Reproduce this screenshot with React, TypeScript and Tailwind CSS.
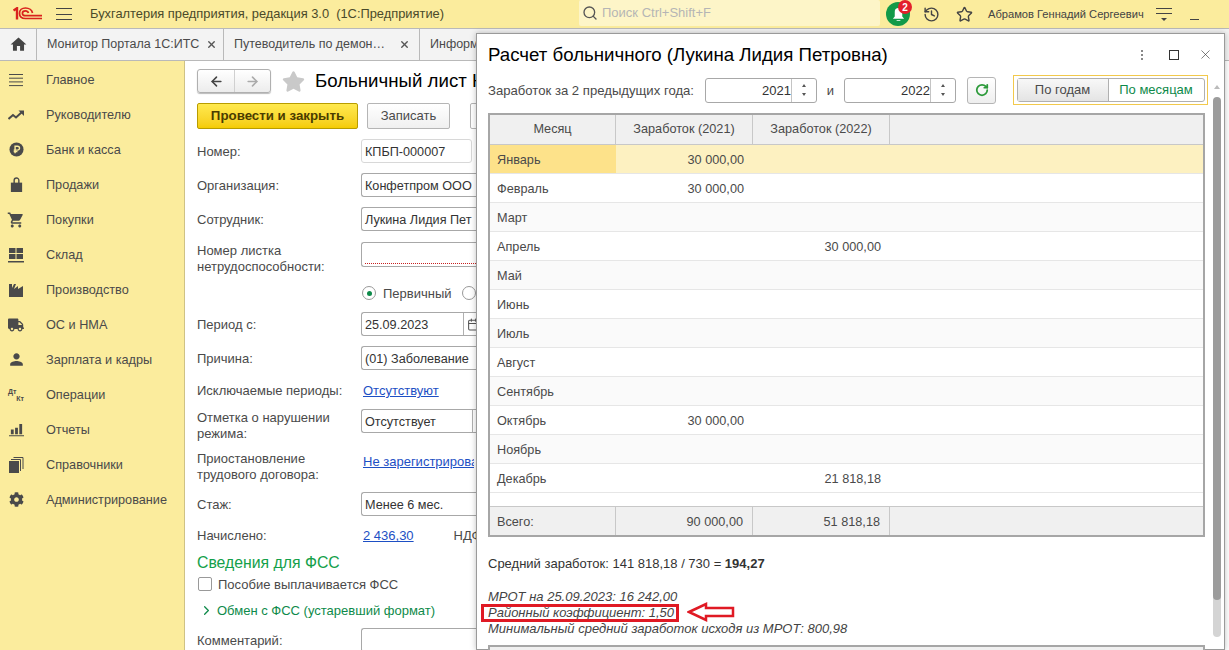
import { type ReactNode } from "react";
import { ArrowLeft, ArrowRight, Calendar, ChevronRight, History, RotateCw, Search, Star, X } from "lucide-react";
import { FaCog, FaStar, FaTruck } from "react-icons/fa";
import { MdHome, MdPerson, MdShoppingCart } from "react-icons/md";

const Ruble = () => (
  <svg viewBox="0 0 16 16" className="size-[15px]">
    <circle cx="8" cy="8" r="7.5" fill="#4a4a4a" />
    <path d="M6.5 12V4.5h2.6a2 2 0 0 1 0 4.2H5M5 10.3h4" fill="none" stroke="#fbec9d" strokeWidth="1.5" />
  </svg>
);

const Bag = () => (
  <svg viewBox="0 0 16 16" className="size-[15px]">
    <path d="M2 6h12v10H2z" fill="#4a4a4a" />
    <path d="M5.5 8V3.5a2.5 2.5 0 0 1 5 0V8" fill="none" stroke="#4a4a4a" strokeWidth="1.5" />
  </svg>
);

const Warehouse = () => (
  <svg viewBox="0 0 16 16" className="size-[16px]">
    <path d="M1 1h6.5v5H1zM8.5 1H15v5H8.5zM1 7h6.5v5H1zM8.5 7H15v5H8.5zM0 14h16v1.4H0z" fill="#4a4a4a" />
  </svg>
);

const Factory = () => (
  <svg viewBox="0 0 16 16" className="size-[16px]">
    <path d="M1 15V2h3v4l2-4h2l-2 5 4-3v3l5-3v11z" fill="#4a4a4a" />
  </svg>
);

const Bars = () => (
  <svg viewBox="0 0 16 16" className="size-[15px]">
    <path d="M2 8h3v5H2zM6.5 6h3v7h-3zM11 2h3v11h-3zM0 14h16v1.2H0z" fill="#4a4a4a" />
  </svg>
);

const Docs = () => (
  <svg viewBox="0 0 16 16" className="size-[16px]">
    <path d="M1 4h10v12H1z" fill="#4a4a4a" />
    <path d="M12.5 14V2.5H3M15 12V.5H5.5" fill="none" stroke="#4a4a4a" />
  </svg>
);

const Lines = () => (
  <svg viewBox="0 0 16 16" className="size-[16px]">
    <path d="M1 2.5h14M1 6.2h14M1 9.9h14M1 13.6h14" stroke="#4a4a4a" />
  </svg>
);

const Trend = () => (
  <svg viewBox="0 0 16 16" className="size-[16px]">
    <path d="M.5 12l4.5-4 3 2.5L14 5" fill="none" stroke="#4a4a4a" strokeWidth="2" />
    <path d="M10.5 3.5H16V9z" fill="#4a4a4a" />
  </svg>
);

const DtKt = () => (
  <div className="flex w-[16px] flex-col text-[7px] leading-[7px] font-bold text-[#4a4a4a]">
    <span>Дт</span>
    <span className="self-end">Кт</span>
  </div>
);

const Logo = () => (
  <svg viewBox="0 0 30 14" className="h-[14px] w-[30px]">
    <path d="M.5 3.5L4 1.200V12.500" fill="none" stroke="#d9231d" strokeWidth="2.400" />
    <path d="M19.500 6C19 3 16 1 12.500 1C9 1 6.500 3 6.500 6.200C6.500 9.500 9 11.500 12.500 11.500H29" fill="none" stroke="#d9231d" strokeWidth="1.700" />
    <path d="M15.500 6C15 4.500 14 3.800 12.500 3.800C10.800 3.800 9.400 4.800 9.400 6.200C9.400 7.800 10.800 8.700 12.500 8.700H29" fill="none" stroke="#d9231d" strokeWidth="1.700" />
  </svg>
);

const menu: [ReactNode, string][] = [
  [<Lines />, "Главное"],
  [<Trend />, "Руководителю"],
  [<Ruble />, "Банк и касса"],
  [<Bag />, "Продажи"],
  [<MdShoppingCart size={18} color="#4a4a4a" />, "Покупки"],
  [<Warehouse />, "Склад"],
  [<Factory />, "Производство"],
  [<FaTruck size={16} color="#4a4a4a" />, "ОС и НМА"],
  [<MdPerson size={19} color="#4a4a4a" />, "Зарплата и кадры"],
  [<DtKt />, "Операции"],
  [<Bars />, "Отчеты"],
  [<Docs />, "Справочники"],
  [<FaCog size={15} color="#4a4a4a" />, "Администрирование"],
];

const months: [string, string, string][] = [
  ["Январь", "30 000,00", ""],
  ["Февраль", "30 000,00", ""],
  ["Март", "", ""],
  ["Апрель", "", "30 000,00"],
  ["Май", "", ""],
  ["Июнь", "", ""],
  ["Июль", "", ""],
  ["Август", "", ""],
  ["Сентябрь", "", ""],
  ["Октябрь", "30 000,00", ""],
  ["Ноябрь", "", ""],
  ["Декабрь", "", "21 818,18"],
];

const cols = "grid grid-cols-[126px_137px_137px_1fr]";

// the dialog covers the right part of these, so they stop at its left edge
const openField = "w-[115px] rounded-r-none border-r-0";

const Field = ({ children, className = openField }: { children?: ReactNode; className?: string }) => (
  <div className={`flex h-[24px] shrink-0 items-center overflow-hidden rounded-[3px] border border-[#a8a8a8] bg-white pl-[3px] pt-[2px] text-[12.650px] whitespace-nowrap text-[#333] ${className}`}>
    {children}
  </div>
);

const Row = ({ label, h = 24, mt = 10, children }: { label?: ReactNode; h?: number; mt?: number; children?: ReactNode }) => (
  <div className="flex items-center" style={{ height: h, marginTop: mt }}>
    <div className="w-[164px] shrink-0 pt-[2px] leading-[16px] text-[#4a4a4a]">{label}</div>
    {children}
  </div>
);

const YearInput = ({ value }: { value: string }) => (
  <div className="flex h-[25px] w-[112px] shrink-0 items-center rounded-[3px] border border-[#a8a8a8] bg-white">
    <span className="flex-1 pt-[2px] text-right text-[#333]">{value}</span>
    <div className="flex h-full w-[25px] flex-col items-center justify-center gap-[6px] border-l border-[#c4c4c4]">
      <div className="size-0 border-x-[2px] border-b-[3px] border-x-transparent border-b-[#555]" />
      <div className="size-0 border-x-[2px] border-t-[3px] border-x-transparent border-t-[#555]" />
    </div>
  </div>
);

export default function App() {
  return (
    <div className="relative flex h-[650px] w-[1229px] flex-col overflow-hidden bg-white font-['Liberation_Sans',Arial,sans-serif] text-[13px]">
      <header className="flex h-[28px] items-center bg-[#fbec9d] text-[12.860px]">
        <div className="ml-[13px] w-[30px]"><Logo /></div>
        <div className="ml-[13px] flex w-[16px] flex-col gap-[4.500px]">
          <div className="h-px bg-[#444]" />
          <div className="h-px bg-[#444]" />
          <div className="h-px bg-[#444]" />
        </div>
        <div className="ml-[18px] w-[489px] text-[#4a4a2a]">Бухгалтерия предприятия, редакция 3.0&nbsp; (1С:Предприятие)</div>
        <div className="flex h-[26px] w-[301px] items-center gap-[4px] self-start rounded-[2px] bg-[#fdf5c8] pl-[3px] text-[13px] text-[#b5b5b5]">
          <Search size={16} color="#555" />
          Поиск Ctrl+Shift+F
        </div>
        <div className="relative ml-[6px] flex size-[24px] items-center justify-center rounded-full bg-[#129a48]">
          <svg viewBox="0 0 16 16" className="size-[15px]"><path d="M8 1a4 4 0 0 1 4 4v5l2 2.500H2L4 10V5a4 4 0 0 1 4-4zM6 14h4v1H6z" fill="#fff" /></svg>
          <div className="absolute top-[-2px] left-[12px] flex size-[14px] items-center justify-center rounded-full bg-[#e3202c] text-[10px] font-bold text-white">2</div>
        </div>
        <History size={17} color="#444" className="ml-[13px]" />
        <Star size={17} color="#444" className="ml-[16px]" />
        <div className="ml-[15px] w-[155px] text-[11.150px] whitespace-nowrap text-[#444]">Абрамов Геннадий Сергеевич</div>
        <div className="ml-[13px] flex w-[16px] flex-col items-center gap-[4px]">
          <div className="h-px w-full bg-[#444]" />
          <div className="h-px w-full bg-[#444]" />
          <div className="size-0 border-x-[3px] border-t-[3px] border-x-transparent border-t-[#444]" />
        </div>
        <div className="mt-[10px] ml-[18px] h-px w-[9px] bg-[#444]" />
      </header>

      <nav className="flex h-[33px] border-y border-[#b9b9b9] bg-[#f3f3f3] text-[12.500px] text-[#4a4a4a]">
        <div className="flex w-[37px] items-center justify-center border-r border-[#b9b9b9]"><MdHome size={19} color="#444" /></div>
        <div className="flex w-[187px] items-center justify-between border-r border-[#b9b9b9] pr-[6px] pl-[10px]">
          Монитор Портала 1С:ИТС
          <X size={11} strokeWidth={3} color="#555" />
        </div>
        <div className="flex w-[196px] items-center justify-between border-r border-[#b9b9b9] pr-[9px] pl-[10px]">
          Путеводитель по демон…
          <X size={11} strokeWidth={3} color="#555" />
        </div>
        <div className="flex w-[56px] items-center overflow-hidden pl-[10px]">Информ</div>
      </nav>

      <div className="flex min-h-0 flex-1">
        <aside className="w-[185px] shrink-0 border-r border-[#cfc285] bg-[#fbec9d] pt-[1px] text-[12.700px]">
          {menu.map(([icon, name]) => (
            <div key={name} className="flex h-[35px] items-center text-[#4a4a4a]">
              <div className="flex w-[46px] justify-center pr-[14px]">{icon}</div>
              <span className="pt-[2px]">{name}</span>
            </div>
          ))}
        </aside>

        <main className="min-w-0 flex-1 overflow-hidden pl-[12px]">
          <div className="mt-[8px] flex h-[24px] items-center">
            <div className="flex h-[24px] w-[74px] rounded-[3px] border border-[#b0b0b0] bg-gradient-to-b from-white to-[#ececec] shadow-[0_1px_1px_#bbb]">
              <div className="flex w-[37px] items-center justify-center border-r border-[#d0d0d0]"><ArrowLeft size={15} strokeWidth={2.500} color="#444" /></div>
              <div className="flex flex-1 items-center justify-center"><ArrowRight size={15} strokeWidth={2.500} color="#aaa" /></div>
            </div>
            <FaStar size={23} color="#c9c9c9" className="ml-[11px]" />
            <div className="ml-[10px] w-[161px] overflow-hidden text-[18.670px] whitespace-nowrap text-black">Больничный лист Н</div>
          </div>
          <div className="mt-[10px] flex h-[26px] gap-[9px]">
            <div className="flex w-[161px] items-center justify-center rounded-[2px] border border-[#b89c00] bg-gradient-to-b from-[#ffe94d] to-[#f5cc00] text-[13.300px] font-bold text-[#4a3c00]">Провести и закрыть</div>
            <div className="flex w-[83px] items-center justify-center rounded-[2px] border border-[#b5b5b5] bg-gradient-to-b from-white to-[#f0f0f0] text-[#4a4a4a]">Записать</div>
            <div className="ml-[11px] w-[60px] rounded-[2px] border border-[#b5b5b5] bg-white" />
          </div>

          <Row label="Номер:" mt={10}><Field className="w-[111px] border-[#d8d8d8]">КПБП-000007</Field></Row>
          <Row label="Организация:"><Field>Конфетпром ООО</Field></Row>
          <Row label="Сотрудник:"><Field>Лукина Лидия Пет</Field></Row>
          <Row label={<>Номер листка<br />нетрудоспособности:</>} h={32} mt={11}>
            <Field className={`mb-[7px] h-[25px] items-end ${openField}`}><div className="mb-[2px] w-full border-b border-dotted border-[#c82020]" /></Field>
          </Row>
          <Row mt={9} h={20}>
            <div className="flex items-center gap-[7px] text-[#4a4a4a]">
              <div className="ml-[1px] flex size-[14px] items-center justify-center rounded-full border border-[#999]"><div className="size-[5px] rounded-full bg-[#0e8a4a]" /></div>
              <span className="pt-[1px]">Первичный</span>
              <div className="ml-[3px] size-[14px] rounded-full border border-[#999]" />
            </div>
          </Row>
          <Row label="Период с:" mt={9}>
            <Field>
              <span className="w-[98px] shrink-0">25.09.2023</span>
              <span className="-mt-[2px] flex h-[22px] shrink-0 items-center border-l border-[#b0b0b0] pl-[3px]"><Calendar size={13} color="#555" /></span>
            </Field>
          </Row>
          <Row label="Причина:"><Field>(01) Заболевание</Field></Row>
          <Row label="Исключаемые периоды:" h={16} mt={12}><span className="pt-[2px] pl-[2px] text-[#1d4fc4] underline">Отсутствуют</span></Row>
          <Row label={<>Отметка о нарушении<br />режима:</>} h={32} mt={11}>
            <Field className={`mb-[8px] ${openField}`}><span className="w-[107px] shrink-0">Отсутствует</span><span className="-mt-[2px] h-[22px] border-l border-[#b0b0b0]" /></Field>
          </Row>
          <Row label={<>Приостановление<br />трудового договора:</>} h={32} mt={9}>
            <span className="-mt-[8px] w-[113px] shrink-0 overflow-hidden pl-[2px] whitespace-nowrap text-[#1d4fc4] underline">Не зарегистрировано</span>
          </Row>
          <Row label="Стаж:" mt={10}><Field>Менее 6 мес.</Field></Row>
          <Row label="Начислено:" h={16} mt={11}>
            <span className="pt-[2px] pl-[2px] text-[#1d4fc4] underline">2 436,30</span>
            <span className="ml-[40px] w-[23px] overflow-hidden pt-[2px] whitespace-nowrap text-[#4a4a4a]">НДФЛ</span>
          </Row>
          <div className="mt-[10px] h-[20px] text-[15.800px] leading-[20px] text-[#14a04a]">Сведения для ФСС</div>
          <div className="mt-[1px] flex h-[20px] items-center gap-[6px] text-[#4a4a4a]">
            <div className="ml-[1px] size-[14px] rounded-[2px] border border-[#999] bg-white" />
            <span className="pt-[1px]">Пособие выплачивается ФСС</span>
          </div>
          <div className="mt-[6px] flex h-[20px] items-center gap-[3px] text-[#0e8a4a]">
            <ChevronRight size={15} color="#0e8a4a" className="ml-[2px]" />
            <span className="pt-[1px]">Обмен с ФСС (устаревший формат)</span>
          </div>
          <Row label="Комментарий:" h={24} mt={8}><Field /></Row>
        </main>
      </div>

      <section className="absolute top-[33px] left-[476px] flex h-[617px] w-[749px] flex-col border border-[#9a9a9a] bg-white shadow-[0_0_6px_rgba(0,0,0,0.25)]">
        <div className="flex h-[41px] shrink-0 items-center pr-[11px] pl-[11px]">
          <div className="flex-1 text-[18.670px] text-black">Расчет больничного (Лукина Лидия Петровна)</div>
          <div className="flex flex-col gap-[2px]">
            <div className="size-[2px] bg-[#888]" />
            <div className="size-[2px] bg-[#888]" />
            <div className="size-[2px] bg-[#888]" />
          </div>
          <div className="mr-[1px] ml-[26px] size-[10px] border border-[#333]" />
          <X size={15} strokeWidth={1} color="#333" className="ml-[18px]" />
        </div>
        <div className="flex min-h-0 flex-1">
          <div className="w-[736px] shrink-0 pl-[11px]">
            <div className="flex h-[30px] items-center text-[#4a4a4a]">
              <span className="w-[217px] shrink-0 pt-[2px] text-[13.130px]">Заработок за 2 предыдущих года:</span>
              <YearInput value="2021" />
              <span className="w-[27px] shrink-0 pt-[2px] text-center">и</span>
              <YearInput value="2022" />
              <div className="ml-[11px] flex h-[27px] w-[29px] shrink-0 items-center justify-center rounded-[3px] border border-[#b5b5b5] bg-gradient-to-b from-white to-[#eee]">
                <RotateCw size={14} strokeWidth={3} color="#2c9a3a" />
              </div>
              <div className="ml-[17px] flex h-[30px] w-[195px] shrink-0 items-center justify-center border border-[#f2c94c]">
                <div className="flex h-[24px] w-[188px] rounded-[3px] border border-[#b0b0b0]">
                  <div className="flex w-[91px] items-center justify-center border-r border-[#b0b0b0] bg-gradient-to-b from-[#f8f8f8] to-[#e4e4e4]">По годам</div>
                  <div className="flex flex-1 items-center justify-center text-[#0e8a4a]">По месяцам</div>
                </div>
              </div>
            </div>

            <div className="mt-[8px] w-[717px] border-2 border-[#a6a6a6] text-[12.700px] text-[#4a4a4a]">
              <div className={`${cols} h-[30px] border-b border-[#c8c8c8] bg-[#f0f0f0] text-center`}>
                <div className="flex items-center justify-center border-r border-[#c8c8c8]">Месяц</div>
                <div className="flex items-center justify-center border-r border-[#c8c8c8]">Заработок (2021)</div>
                <div className="flex items-center justify-center border-r border-[#c8c8c8]">Заработок (2022)</div>
                <div />
              </div>
              {months.map(([name, a, b], i) => (
                <div key={name} className={`${cols} h-[29px] border-b border-[#e6e6e6] ${i === 0 ? "bg-[#fdf1c1]" : i % 2 === 0 ? "bg-[#fafafa]" : "bg-white"}`}>
                  <div className={`flex items-center pt-[4px] pl-[7px] ${i === 0 ? "bg-[#fde28a]" : ""}`}>{name}</div>
                  <div className="flex items-center justify-end pt-[4px] pr-[9px]">{a}</div>
                  <div className="flex items-center justify-end pt-[4px] pr-[9px]">{b}</div>
                  <div />
                </div>
              ))}
              <div className="h-[13px]" />
              <div className={`${cols} h-[29px] border-t border-[#c8c8c8] bg-[#f0f0f0]`}>
                <div className="flex items-center border-r border-[#c8c8c8] pt-[3px] pl-[7px]">Всего:</div>
                <div className="flex items-center justify-end border-r border-[#c8c8c8] pt-[3px] pr-[9px]">90 000,00</div>
                <div className="flex items-center justify-end border-r border-[#c8c8c8] pt-[3px] pr-[9px]">51 818,18</div>
                <div />
              </div>
            </div>

            <div className="mt-[19px] h-[16px] leading-[16px] text-[#333]">
              Средний заработок: 141 818,18 / 730 = <b>194,27</b>
            </div>
            <div className="mt-[17px] leading-[16px] text-[#444] italic">
              <div>МРОТ на 25.09.2023: 16 242,00</div>
              <div className="relative">
                Районный коэффициент: 1,50
                <div className="absolute top-[-1px] left-[-7px] h-[18px] w-[198px] border-[3px] border-[#e01a24]" />
                <svg viewBox="0 0 48 20" className="absolute top-[-3px] left-[199px] h-[20px] w-[48px]">
                  <path d="M2 10L19 2v4h27v8H19v4z" fill="#fff" stroke="#e01a24" strokeWidth="2.500" />
                </svg>
              </div>
              <div>Минимальный средний заработок исходя из МРОТ: 800,98</div>
            </div>
            <div className="mt-[8px] h-[20px] w-[717px] border-2 border-b-0 border-[#a6a6a6] bg-[#f0f0f0]" />
          </div>
          <div className="flex w-[8px] flex-col items-center">
            <div className="mt-[10px] size-0 border-x-[3px] border-b-[4px] border-x-transparent border-b-[#bbb]" />
            <div className="mt-[8px] flex w-[8px] flex-col">
              <div className="z-10 h-[503px] rounded-[4px] bg-[#9c9c9c]" />
              <div className="-mt-[3px] h-[40px] rounded-b-[4px] bg-[#d4d4d4]" />
            </div>
          </div>
        </div>
      </section>
    </div>
  );
}
